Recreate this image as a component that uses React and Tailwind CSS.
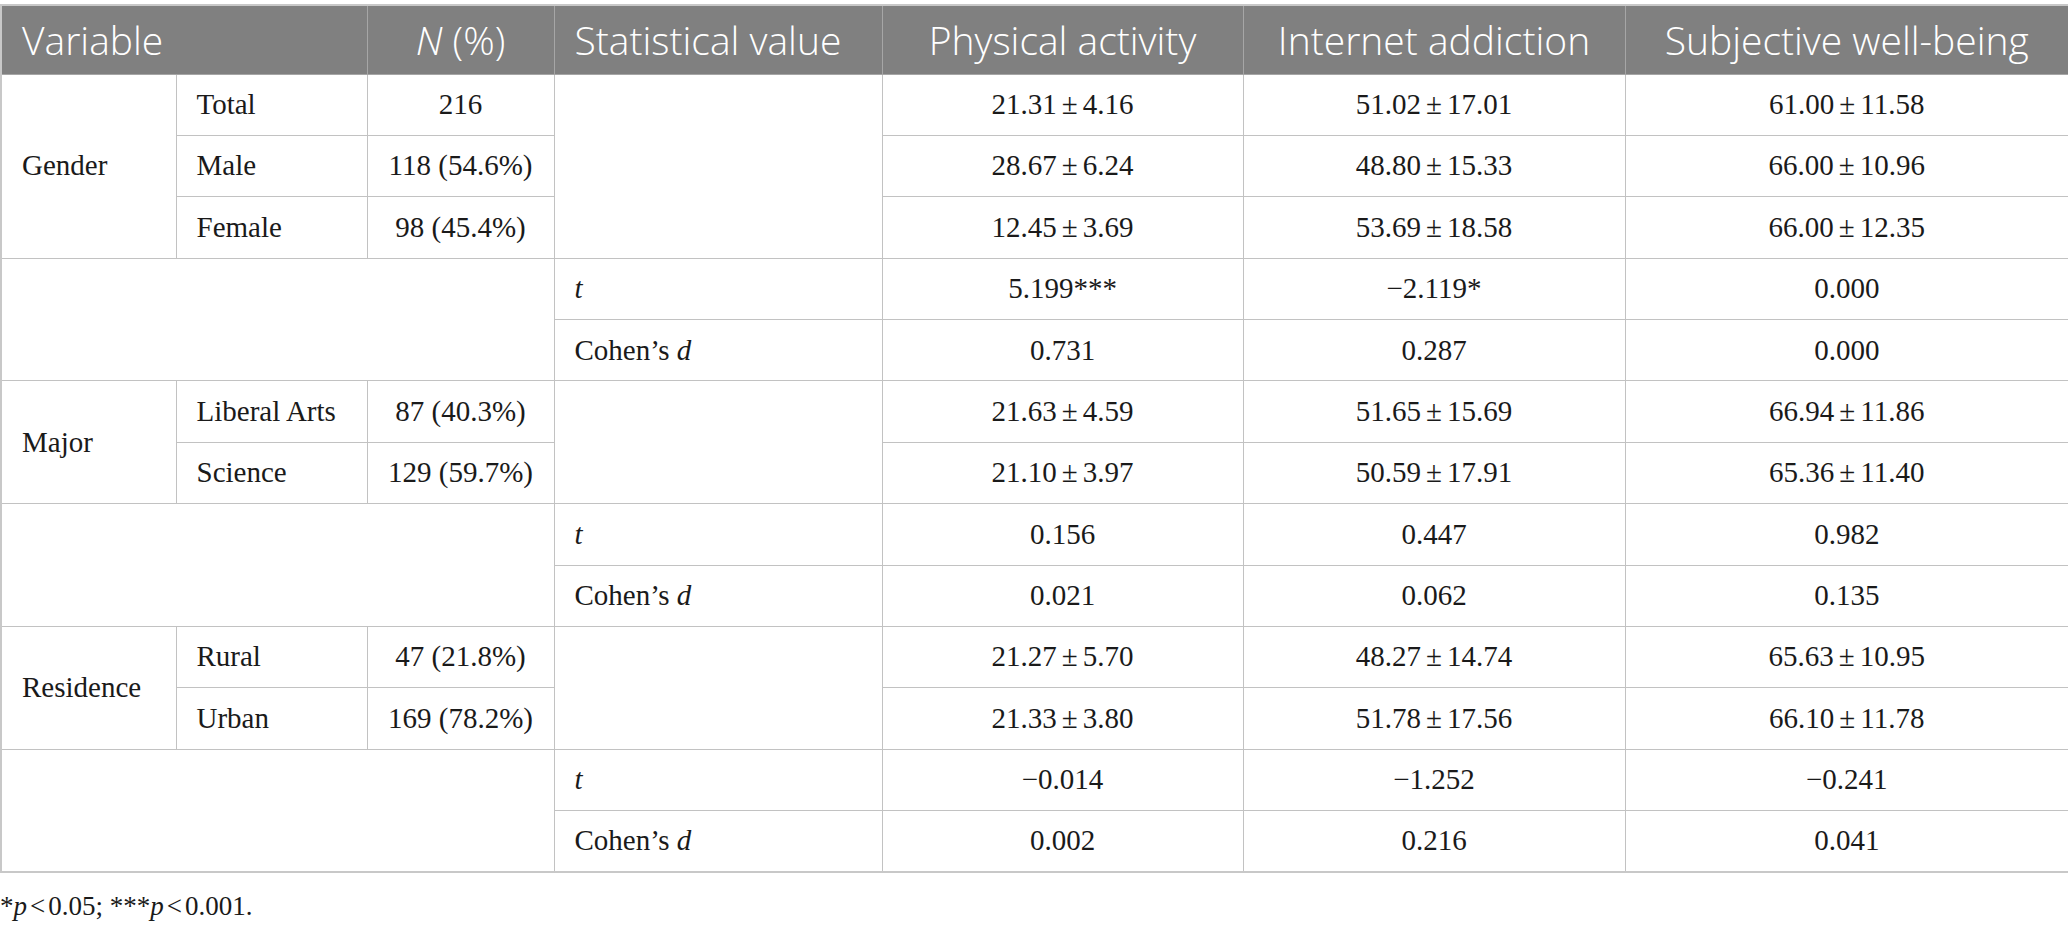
const HEAD = ["Statistical value", "Physical activity", "Internet addiction", "Subjective well-being"];

const GROUPS = [
  {
    name: "Gender",
    rows: [
      ["Total", "216", "21.31±4.16", "51.02±17.01", "61.00±11.58"],
      ["Male", "118 (54.6%)", "28.67±6.24", "48.80±15.33", "66.00±10.96"],
      ["Female", "98 (45.4%)", "12.45±3.69", "53.69±18.58", "66.00±12.35"],
    ],
    t: ["5.199***", "−2.119*", "0.000"],
    d: ["0.731", "0.287", "0.000"],
  },
  {
    name: "Major",
    rows: [
      ["Liberal Arts", "87 (40.3%)", "21.63±4.59", "51.65±15.69", "66.94±11.86"],
      ["Science", "129 (59.7%)", "21.10±3.97", "50.59±17.91", "65.36±11.40"],
    ],
    t: ["0.156", "0.447", "0.982"],
    d: ["0.021", "0.062", "0.135"],
  },
  {
    name: "Residence",
    rows: [
      ["Rural", "47 (21.8%)", "21.27±5.70", "48.27±14.74", "65.63±10.95"],
      ["Urban", "169 (78.2%)", "21.33±3.80", "51.78±17.56", "66.10±11.78"],
    ],
    t: ["−0.014", "−1.252", "−0.241"],
    d: ["0.002", "0.216", "0.041"],
  },
];

const td = "border border-[#c2c2c2] align-middle";
const left = `${td} text-left pl-[20px]`;
const mid = `${td} text-center`;

// mean ± sd, with a little air around the sign
function MeanSd({ value }) {
  const [m, sd] = value.split("±");
  return (
    <>
      {m}
      <span className="mx-[5px]">±</span>
      {sd}
    </>
  );
}

function GroupRows({ g }) {
  return (
    <>
      {g.rows.map((r, i) => (
        <tr key={r[0]} className="h-[61.4px]">
          {i === 0 && (
            <td rowSpan={g.rows.length} className={left}>
              {g.name}
            </td>
          )}
          <td className={left}>{r[0]}</td>
          <td className={mid}>{r[1]}</td>
          {i === 0 && <td rowSpan={g.rows.length} className={td} />}
          {r.slice(2).map((v, k) => (
            <td key={k} className={mid}>
              <MeanSd value={v} />
            </td>
          ))}
        </tr>
      ))}
      <tr className="h-[61.4px]">
        <td rowSpan={2} colSpan={3} className={td} />
        <td className={left}>
          <i>t</i>
        </td>
        {g.t.map((v, i) => (
          <td key={i} className={mid}>
            {v}
          </td>
        ))}
      </tr>
      <tr className="h-[61.4px]">
        <td className={left}>
          Cohen’s <i>d</i>
        </td>
        {g.d.map((v, i) => (
          <td key={i} className={mid}>
            {v}
          </td>
        ))}
      </tr>
    </>
  );
}

export default function App() {
  return (
    <div className="w-[2068px] min-h-[926px] bg-white pt-[4px]">
      <table className="w-[2068px] table-fixed border-collapse border-2 border-[#c8c8c8] font-['Liberation_Serif',serif] text-[29px] text-[#1a1a1a]">
        <colgroup>
          <col className="w-[175px]" />
          <col className="w-[191px]" />
          <col className="w-[187px]" />
          <col className="w-[328px]" />
          <col className="w-[361px]" />
          <col className="w-[382px]" />
          <col className="w-[444px]" />
        </colgroup>
        <thead>
          <tr className="h-[69px] bg-[#808080] text-white font-['Open_Sans',sans-serif] text-[39px]">
            <th colSpan={2} className="border border-[#a6a6a6] text-left pl-[20px] font-light">
              Variable
            </th>
            <th className="border border-[#a6a6a6] text-center font-light">
              <i>N</i> (%)
            </th>
            <th className="border border-[#a6a6a6] text-left pl-[20px] font-light">{HEAD[0]}</th>
            {HEAD.slice(1).map((h) => (
              <th key={h} className="border border-[#a6a6a6] text-center font-light">
                {h}
              </th>
            ))}
          </tr>
        </thead>
        <tbody>
          {GROUPS.map((g) => (
            <GroupRows key={g.name} g={g} />
          ))}
        </tbody>
      </table>
      <p className="mt-[16px] font-['Liberation_Serif',serif] text-[27px] leading-[34px] text-[#1a1a1a]">
        *<i>p</i>
        <span className="mx-[3px]">&lt;</span>0.05; ***<i>p</i>
        <span className="mx-[3px]">&lt;</span>0.001.
      </p>
    </div>
  );
}
